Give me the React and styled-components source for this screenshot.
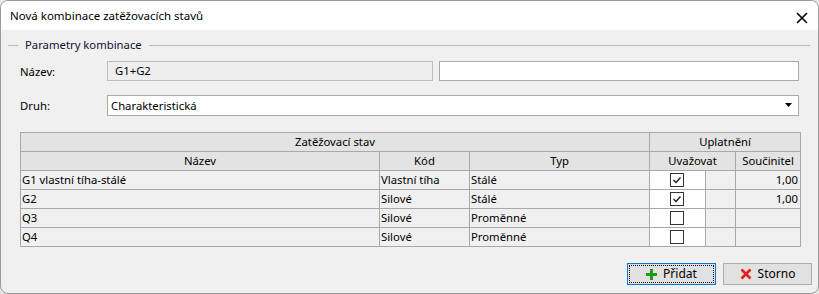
import React from "react";
import styled, { createGlobalStyle } from "styled-components";

const GlobalStyle = createGlobalStyle`
  html, body {
    margin: 0;
    padding: 0;
    background: #e8e8e4;
  }
  body {
    font-family: "Noto Sans", "Open Sans", sans-serif;
    font-size: 11.3px;
    color: #000;
  }
  * {
    box-sizing: border-box;
  }
`;

export const Window = styled.div`
  width: 819px;
  height: 294px;
  border: 1px solid #9a9a9a;
  border-radius: 8px;
  overflow: hidden;
  display: flex;
  flex-direction: column;
  background: #f0f0f0;
`;

export const TitleBar = styled.div`
  height: 29px;
  background: #fff;
  display: flex;
  align-items: center;
  justify-content: space-between;
  padding: 0 9px 0 9px;
`;

export const Title = styled.span`
  font-size: 11.5px;
  line-height: 16px;
  margin-top: 1px;
`;

export const CloseButton = styled.button`
  width: 14px;
  height: 14px;
  padding: 0;
  border: 0;
  background: transparent;
  display: flex;
  align-items: center;
  justify-content: center;
  margin-top: 4px;
`;

export const Body = styled.div`
  flex: 1;
  display: flex;
  flex-direction: column;
  padding: 7px 8px 0 7px;
`;

export const GroupHeader = styled.div`
  display: flex;
  align-items: center;
  height: 16px;
  gap: 7px;
  &::before,
  &::after {
    content: "";
    height: 1px;
    background: #b9b9b9;
  }
  &::before {
    width: 10px;
  }
  &::after {
    flex: 1;
  }
`;

export const Legend = styled.span`
  color: #101030;
  line-height: 16px;
`;

export const FormRow = styled.div`
  display: flex;
  align-items: center;
  gap: 6px;
  margin: ${(p) => p.$top}px 11px 0 12px;
  height: 20px;
`;

export const Label = styled.span`
  width: 81px;
  flex: none;
`;

export const TextBox = styled.div`
  height: 20px;
  border: 1px solid ${(p) => (p.$readOnly ? "#bdbdbd" : "#a9a9a9")};
  background: ${(p) => (p.$readOnly ? "#eeeeee" : "#fff")};
  flex: ${(p) => p.$grow || 1};
  width: ${(p) => (p.$width ? p.$width + "px" : "auto")};
  padding: 0 4px 0 7px;
  display: flex;
  align-items: center;
  line-height: 16px;
`;

export const Select = styled.div`
  flex: 1;
  height: 21px;
  border: 1px solid #a9a9a9;
  background: #fff;
  display: flex;
  align-items: center;
  justify-content: space-between;
  padding: 0 6px 0 3px;
`;

export const Grid = styled.table`
  margin: 17px 11px 0 12px;
  border-collapse: collapse;
  table-layout: fixed;
  width: 781px;
  line-height: 16px;
`;

export const HeadCell = styled.th`
  height: 19px;
  padding: 0;
  border: 1px solid #a8a8a8;
  background: #e3e3e3;
  font-weight: normal;
  text-align: center;
`;

export const Cell = styled.td`
  height: 19px;
  padding: 0 2px 0 1px;
  border: 1px solid #a8a8a8;
  background: ${(p) => (p.$white ? "#fff" : "#f0f0f0")};
  text-align: ${(p) => p.$align || "left"};
  white-space: nowrap;
  overflow: hidden;
`;

export const CheckBox = styled.span`
  display: block;
  width: 14px;
  height: 14px;
  margin: 0 auto;
  border: 1px solid #333;
  background: #fff;
  position: relative;
`;

export const Buttons = styled.div`
  display: flex;
  justify-content: flex-end;
  gap: 7px;
  margin-top: auto;
  margin-bottom: 8px;
  margin-right: -2px;
`;

export const Button = styled.button`
  width: 89px;
  height: 22px;
  font: inherit;
  color: #000;
  background: #e1e1e1;
  border: 1px solid ${(p) => (p.$default ? "#0078d7" : "#adadad")};
  padding: 1px;
  display: flex;
`;

export const ButtonFace = styled.span`
  flex: 1;
  display: flex;
  align-items: center;
  justify-content: center;
  gap: 6px;
  border: 1px dotted ${(p) => (p.$focus ? "#000" : "transparent")};
  line-height: 16px;
  font-size: 12px;
`;

const CloseIcon = () => (
  <svg width="12" height="12" viewBox="0 0 12 12">
    <path d="M1 1 L11 11 M11 1 L1 11" stroke="#000" strokeWidth="1.6" />
  </svg>
);

const Arrow = () => (
  <svg width="7" height="4" viewBox="0 0 7 4">
    <path d="M0 0 H7 L3.5 4 Z" fill="#000" />
  </svg>
);

const Check = () => (
  <svg width="12" height="12" viewBox="0 0 12 12" style={{ position: "absolute", left: 0, top: 0 }}>
    <path d="M2.5 6 L5 8.5 L9.5 3.5" stroke="#1a1a1a" strokeWidth="1.3" fill="none" />
  </svg>
);

const PlusIcon = () => (
  <svg width="11" height="11" viewBox="0 0 11 11">
    <path d="M5.5 0 V11 M0 5.5 H11" stroke="#1f9a1f" strokeWidth="3" />
  </svg>
);

const CrossIcon = () => (
  <svg width="12" height="12" viewBox="0 0 12 12">
    <path d="M1.5 1.5 L10.5 10.5 M10.5 1.5 L1.5 10.5" stroke="#e0201b" strokeWidth="2.6" />
  </svg>
);

const rows = [
  { name: "G1 vlastní tíha-stálé", code: "Vlastní tíha", type: "Stálé", on: true, coef: "1,00" },
  { name: "G2", code: "Silové", type: "Stálé", on: true, coef: "1,00" },
  { name: "Q3", code: "Silové", type: "Proměnné", on: false, coef: "" },
  { name: "Q4", code: "Silové", type: "Proměnné", on: false, coef: "" },
];

export default function App() {
  return (
    <>
      <GlobalStyle />
      <Window>
        <TitleBar>
          <Title>Nová kombinace zatěžovacích stavů</Title>
          <CloseButton>
            <CloseIcon />
          </CloseButton>
        </TitleBar>
        <Body>
          <GroupHeader>
            <Legend>Parametry kombinace</Legend>
          </GroupHeader>
          <FormRow $top={8}>
            <Label>Název:</Label>
            <TextBox $readOnly $width={326} $grow="none">G1+G2</TextBox>
            <TextBox />
          </FormRow>
          <FormRow $top={14}>
            <Label>Druh:</Label>
            <Select>
              <span>Charakteristická</span>
              <Arrow />
            </Select>
          </FormRow>
          <Grid>
            <colgroup>
              <col style={{ width: 359 }} />
              <col style={{ width: 90 }} />
              <col style={{ width: 180 }} />
              <col style={{ width: 56 }} />
              <col style={{ width: 30 }} />
              <col style={{ width: 65 }} />
            </colgroup>
            <thead>
              <tr>
                <HeadCell colSpan={3}>Zatěžovací stav</HeadCell>
                <HeadCell colSpan={3}>Uplatnění</HeadCell>
              </tr>
              <tr>
                <HeadCell>Název</HeadCell>
                <HeadCell>Kód</HeadCell>
                <HeadCell>Typ</HeadCell>
                <HeadCell colSpan={2}>Uvažovat</HeadCell>
                <HeadCell>Součinitel</HeadCell>
              </tr>
            </thead>
            <tbody>
              {rows.map((r) => (
                <tr key={r.name}>
                  <Cell>{r.name}</Cell>
                  <Cell>{r.code}</Cell>
                  <Cell>{r.type}</Cell>
                  <Cell $white>
                    <CheckBox>{r.on && <Check />}</CheckBox>
                  </Cell>
                  <Cell />
                  <Cell $align="right">{r.coef}</Cell>
                </tr>
              ))}
            </tbody>
          </Grid>
          <Buttons>
            <Button $default>
              <ButtonFace $focus>
                <PlusIcon />
                Přidat
              </ButtonFace>
            </Button>
            <Button>
              <ButtonFace>
                <CrossIcon />
                Storno
              </ButtonFace>
            </Button>
          </Buttons>
        </Body>
      </Window>
    </>
  );
}
